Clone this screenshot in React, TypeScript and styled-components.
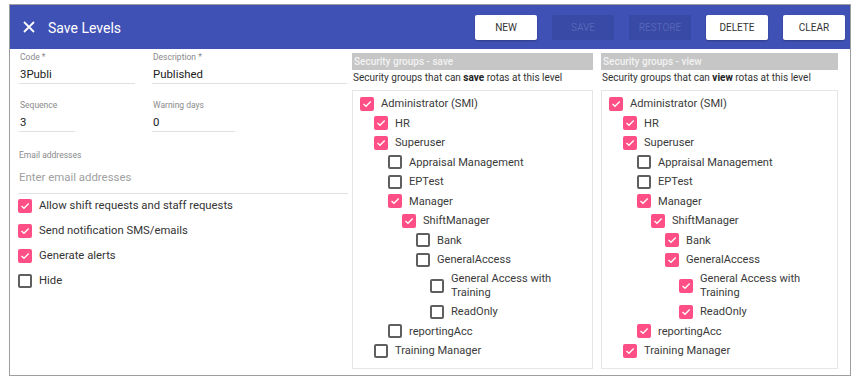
import React from "react";
import styled, { createGlobalStyle } from "styled-components";

const Global = createGlobalStyle`
  html, body { margin: 0; padding: 0; background: #ffffff; }
  body { font-family: Roboto, "Liberation Sans", Arial, sans-serif; color: #212121; }
  * { box-sizing: border-box; }
`;

const Frame = styled.div`
  margin: 4px 0 0 9px;
  width: 842px;
  height: 372px;
  border: 1px solid #9e9e9e;
  display: flex;
  flex-direction: column;
  background: #fff;
`;

const Header = styled.div`
  height: 44px;
  background: #3f51b5;
  display: flex;
  align-items: center;
  padding: 0 5px 0 13px;
  flex-shrink: 0;
`;

const CloseBtn = styled.div`
  width: 12px;
  height: 12px;
  display: flex;
  margin-right: 13px;
`;

const Title = styled.div`
  color: #fff;
  font-size: 14px;
  font-weight: 400;
  flex: 1;
  padding-top: 1px;
`;

const Toolbar = styled.div`
  display: flex;
  gap: 15px;
`;

const ActionButton = styled.button<{ $disabled?: boolean }>`
  width: 62px;
  height: 25px;
  border: none;
  border-radius: 2px;
  font-family: Roboto, "Liberation Sans", Arial, sans-serif;
  font-size: 10px;
  font-weight: 400;
  text-transform: uppercase;
  padding: 0;
  background: ${(p) => (p.$disabled ? "#3949a6" : "#ffffff")};
  color: ${(p) => (p.$disabled ? "#5566b8" : "#333333")};
  box-shadow: ${(p) => (p.$disabled ? "none" : "0 1px 2px rgba(0,0,0,0.25)")};
`;

const Body = styled.div`
  flex: 1;
  display: grid;
  grid-template-columns: 328px 241px 240px;
  column-gap: 5px;
  padding: 0 0 0 9px;
  & > :nth-child(3) {
    margin-left: 3px;
  }
`;

const LeftCol = styled.div`
  display: flex;
  flex-direction: column;
  padding-top: 2px;
`;

const FieldGrid = styled.div`
  display: grid;
  grid-template-columns: 116px 195px;
  column-gap: 17px;
  row-gap: 15px;
  align-items: start;
`;

const Field = styled.div<{ $w?: number }>`
  width: ${(p) => (p.$w ? `${p.$w}px` : "auto")};
  display: flex;
  flex-direction: column;
  border-bottom: 1px solid #e0e0e0;
`;

const Label = styled.div<{ $gap?: number }>`
  font-size: 8.5px;
  line-height: 12px;
  color: #8a8a8a;
  margin-bottom: ${(p) => p.$gap ?? 2}px;
  padding-left: 1px;
`;

const Value = styled.div<{ $placeholder?: boolean; $pb?: number }>`
  font-size: 11.4px;
  line-height: 18px;
  color: ${(p) => (p.$placeholder ? "#a0a0a0" : "#212121")};
  padding-left: 1px;
  padding-bottom: ${(p) => p.$pb ?? 0}px;
`;

const EmailField = styled(Field)`
  margin-top: 17px;
  margin-left: -1px;
`;

const CheckList = styled.div`
  display: flex;
  flex-direction: column;
  margin-top: -1px;
`;

const CheckRow = styled.div`
  height: 25px;
  display: flex;
  align-items: center;
  gap: 7px;
  font-size: 11.3px;
  color: #333;
  margin-left: -1px;
`;

const Box = styled.span<{ $checked: boolean }>`
  width: 14px;
  height: 14px;
  flex-shrink: 0;
  border-radius: 2px;
  background: ${(p) => (p.$checked ? "#ff4f86" : "#fff")};
  border: ${(p) => (p.$checked ? "none" : "2px solid #5f5f5f")};
  display: flex;
  align-items: center;
  justify-content: center;
`;

const GroupCol = styled.div`
  display: flex;
  flex-direction: column;
  padding-top: 4px;
  padding-bottom: 6px;
`;

const GroupBar = styled.div`
  height: 17px;
  background: #c6c6c6;
  color: #f2f2f2;
  font-size: 10px;
  font-weight: 500;
  line-height: 17px;
  padding-left: 2px;
`;

const GroupHint = styled.div`
  font-size: 10px;
  line-height: 13px;
  color: #333;
  margin: 1px 0 6px 1px;
  b { font-weight: 700; color: #212121; }
`;

const TreeBox = styled.div`
  flex: 1;
  border: 1px solid #e6e6e6;
  padding: 3px 8px 0 7px;
`;

const TreeItem = styled.div<{ $level: number }>`
  display: flex;
  align-items: center;
  gap: 7px;
  padding: 2.75px 0 2.75px ${(p) => p.$level * 14}px;
  font-size: 11.1px;
  line-height: 13.5px;
  color: #3a3a3a;
`;

const Check = () => (
  <svg width="10" height="8" viewBox="0 0 10 8">
    <path d="M1.5 4 L4 6.3 L8.7 1.5" fill="none" stroke="#fff" strokeWidth="1.3" />
  </svg>
);

const CheckBox = ({ checked }: { checked: boolean }) => (
  <Box $checked={checked}>{checked && <Check />}</Box>
);

type Node = { label: string; level: number };
const nodes: Node[] = [
  { label: "Administrator (SMI)", level: 0 },
  { label: "HR", level: 1 },
  { label: "Superuser", level: 1 },
  { label: "Appraisal Management", level: 2 },
  { label: "EPTest", level: 2 },
  { label: "Manager", level: 2 },
  { label: "ShiftManager", level: 3 },
  { label: "Bank", level: 4 },
  { label: "GeneralAccess", level: 4 },
  { label: "General Access with Training", level: 5 },
  { label: "ReadOnly", level: 5 },
  { label: "reportingAcc", level: 2 },
  { label: "Training Manager", level: 1 },
];

const saveChecked = new Set(["Administrator (SMI)", "HR", "Superuser", "Manager", "ShiftManager"]);
const viewUnchecked = new Set(["Appraisal Management", "EPTest"]);

const Group = ({ kind, isChecked }: { kind: string; isChecked: (l: string) => boolean }) => (
  <GroupCol>
    <GroupBar>Security groups - {kind}</GroupBar>
    <GroupHint>
      Security groups that can <b>{kind}</b> rotas at this level
    </GroupHint>
    <TreeBox>
      {nodes.map((n) => (
        <TreeItem key={n.label} $level={n.level}>
          <CheckBox checked={isChecked(n.label)} />
          <span>{n.label}</span>
        </TreeItem>
      ))}
    </TreeBox>
  </GroupCol>
);

export default function App() {
  return (
    <>
      <Global />
      <Frame>
        <Header>
          <CloseBtn>
            <svg width="12" height="12" viewBox="0 0 12 12">
              <path d="M1 1 L11 11 M11 1 L1 11" stroke="#fff" strokeWidth="1.8" />
            </svg>
          </CloseBtn>
          <Title>Save Levels</Title>
          <Toolbar>
            <ActionButton>New</ActionButton>
            <ActionButton $disabled>Save</ActionButton>
            <ActionButton $disabled>Restore</ActionButton>
            <ActionButton>Delete</ActionButton>
            <ActionButton>Clear</ActionButton>
          </Toolbar>
        </Header>
        <Body>
          <LeftCol>
            <FieldGrid>
              <Field>
                <Label>Code *</Label>
                <Value>3Publi</Value>
              </Field>
              <Field>
                <Label>Description *</Label>
                <Value>Published</Value>
              </Field>
              <Field $w={56}>
                <Label>Sequence</Label>
                <Value>3</Value>
              </Field>
              <Field $w={83}>
                <Label>Warning days</Label>
                <Value>0</Value>
              </Field>
            </FieldGrid>
            <EmailField $w={330}>
              <Label $gap={7}>Email addresses</Label>
              <Value $placeholder $pb={7}>Enter email addresses</Value>
            </EmailField>
            <CheckList>
              <CheckRow><CheckBox checked /> Allow shift requests and staff requests</CheckRow>
              <CheckRow><CheckBox checked /> Send notification SMS/emails</CheckRow>
              <CheckRow><CheckBox checked /> Generate alerts</CheckRow>
              <CheckRow><CheckBox checked={false} /> Hide</CheckRow>
            </CheckList>
          </LeftCol>
          <Group kind="save" isChecked={(l) => saveChecked.has(l)} />
          <Group kind="view" isChecked={(l) => !viewUnchecked.has(l)} />
        </Body>
      </Frame>
    </>
  );
}
